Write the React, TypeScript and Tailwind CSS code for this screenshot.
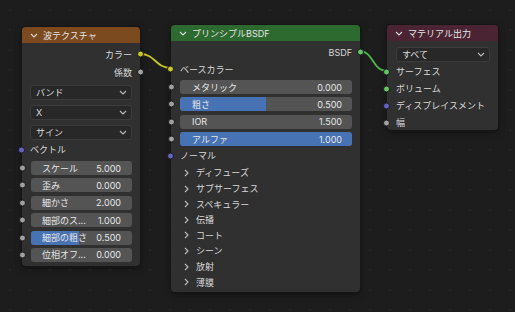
import type { ReactNode } from "react";

const FONT = { fontFamily: 'Inter, "Noto Sans CJK JP", sans-serif' };

const SOCKET: Record<string, string> = {
  yellow: "bg-[#c7c729]",
  gray: "bg-[#a1a1a1]",
  purple: "bg-[#6363c7]",
  green: "bg-[#63c763]",
};

function Socket({ color, side }: { color: string; side: "left" | "right" }) {
  return (
    <span
      className={`absolute top-1/2 size-[7px] -translate-y-1/2 rounded-full border border-[#1b1b1b] ${SOCKET[color]} ${
        side === "left" ? "-left-[4px]" : "-right-[4px]"
      }`}
    />
  );
}

function ChevronDown({ className = "" }: { className?: string }) {
  return (
    <svg viewBox="0 0 8 5" className={`h-[5px] w-[8px] ${className}`} fill="none">
      <polyline points="1,1 4,4 7,1" stroke="currentColor" strokeWidth="1.1" />
    </svg>
  );
}

function ChevronRight() {
  return (
    <svg viewBox="0 0 5 8" className="h-[8px] w-[5px] text-[#bdbdbd]" fill="none">
      <polyline points="1,1 4,4 1,7" stroke="currentColor" strokeWidth="1.1" />
    </svg>
  );
}

function Header({ title, color }: { title: string; color: string }) {
  return (
    <div className={`flex h-[16px] items-center gap-[5px] rounded-t-[4px] pl-[8px] text-[#e4e4e4] ${color}`}>
      <ChevronDown className="text-[#d8d8d8]" />
      <span>{title}</span>
    </div>
  );
}

function Output({ label, color, h }: { label: string; color: string; h: string }) {
  return (
    <div className={`relative flex items-center justify-end pr-[8px] ${h}`}>
      <span>{label}</span>
      <Socket color={color} side="right" />
    </div>
  );
}

function Input({ label, color, h, pl = "pl-[8px]" }: { label: string; color: string; h: string; pl?: string }) {
  return (
    <div className={`relative flex items-center ${pl} ${h}`}>
      <span>{label}</span>
      <Socket color={color} side="left" />
    </div>
  );
}

function Dropdown({ label, className }: { label: string; className: string }) {
  return (
    <div
      className={`flex h-[15px] items-center justify-between rounded-[3px] border border-[#3c3c3c] bg-[#282828] pl-[5px] pr-[4px] text-[#dcdcdc] ${className}`}
    >
      <span>{label}</span>
      <ChevronDown className="text-[#bdbdbd]" />
    </div>
  );
}

function Field({
  label,
  value,
  fill,
  pad,
}: {
  label: string;
  value: string;
  fill: number;
  pad: string;
}) {
  return (
    <div className="relative h-[14px] overflow-hidden rounded-[3px] bg-[#545454] text-[#e6e6e6]">
      <div className="absolute inset-y-0 left-0 bg-[#4772b3]" style={{ width: `${fill * 100}%` }} />
      <div className={`relative flex h-full items-center justify-between ${pad}`}>
        <span>{label}</span>
        <span>{value}</span>
      </div>
    </div>
  );
}

function FieldRow({ children, socket = "gray" }: { children: ReactNode; socket?: string }) {
  return (
    <div className="relative">
      {children}
      <span
        className={`absolute top-1/2 size-[7px] -translate-y-1/2 rounded-full border border-[#1b1b1b] ${SOCKET[socket]} -left-[12.5px]`}
      />
    </div>
  );
}

function Node({ className, children }: { className: string; children: ReactNode }) {
  return (
    <div
      className={`absolute rounded-[4px] bg-[#303030] shadow-[0_0_0_1px_#161616,0_2px_6px_rgba(0,0,0,0.5)] ${className}`}
    >
      {children}
    </div>
  );
}

export default function App() {
  const waveFields: [string, string, number][] = [
    ["スケール", "5.000", 0],
    ["歪み", "0.000", 0],
    ["細かさ", "2.000", 0],
    ["細部のス...", "1.000", 0],
    ["細部の粗さ", "0.500", 0.48],
    ["位相オフ...", "0.000", 0],
  ];
  const bsdfFields: [string, string, number][] = [
    ["メタリック", "0.000", 0],
    ["粗さ", "0.500", 0.5],
    ["IOR", "1.500", 0],
    ["アルファ", "1.000", 1],
  ];
  const panels = ["ディフューズ", "サブサーフェス", "スペキュラー", "伝播", "コート", "シーン", "放射", "薄膜"];

  return (
    <div
      className="relative h-[312px] w-[515px] overflow-hidden bg-[#1d1d1d] bg-[radial-gradient(circle,#242424_0.8px,transparent_1px)] bg-[length:20px_20px] text-[9px] leading-none text-[#d8d8d8]"
      style={FONT}
    >
      <svg className="absolute inset-0" width="515" height="312" fill="none">
        <path d="M140 54 C 156 54, 155 68, 171 68" stroke="#c7c729" strokeWidth="1.8" />
        <path d="M359 51 C 374 51, 372 71, 387 71" stroke="#4fb84f" strokeWidth="1.8" />
      </svg>

      {/* 波テクスチャ */}
      <Node className="left-[22px] top-[27px] h-[239px] w-[118px]">
        <Header title="波テクスチャ" color="bg-[#7b4a1f]" />
        <div className="pt-[2px]">
          <Output label="カラー" color="yellow" h="h-[18px]" />
          <Output label="係数" color="gray" h="h-[18px]" />
          <div className="mt-[4px] flex flex-col gap-[5px] px-[8px]">
            <Dropdown label="バンド" className="" />
            <Dropdown label="X" className="" />
            <Dropdown label="サイン" className="" />
          </div>
          <Input label="ベクトル" color="purple" h="h-[19px]" pl="pl-[8px]" />
          <div className="mt-[2px] flex flex-col gap-[3.4px] pl-[9px] pr-[8px]">
            {waveFields.map(([l, v, f]) => (
              <FieldRow key={l}>
                <Field label={l} value={v} fill={f} pad="pl-[11px] pr-[11px]" />
              </FieldRow>
            ))}
          </div>
        </div>
      </Node>

      {/* プリンシプルBSDF */}
      <Node className="left-[171px] top-[25px] h-[267px] w-[189px]">
        <Header title="プリンシプルBSDF" color="bg-[#2d6a2f]" />
        <div className="pt-[2px]">
          <Output label="BSDF" color="green" h="h-[18px]" />
          <Input label="ベースカラー" color="yellow" h="h-[16px]" pl="pl-[9px]" />
          <div className="mt-[3px] flex flex-col gap-[3.4px] pl-[9px] pr-[8px]">
            {bsdfFields.map(([l, v, f]) => (
              <FieldRow key={l}>
                <Field label={l} value={v} fill={f} pad="pl-[12px] pr-[10px]" />
              </FieldRow>
            ))}
          </div>
          <Input label="ノーマル" color="purple" h="h-[19px]" pl="pl-[9px]" />
          <div className="flex flex-col">
            {panels.map((p) => (
              <div key={p} className="flex h-[15.6px] items-center gap-[7px] pl-[13px]">
                <ChevronRight />
                <span>{p}</span>
              </div>
            ))}
          </div>
        </div>
      </Node>

      {/* マテリアル出力 */}
      <Node className="left-[387px] top-[25px] h-[105px] w-[111px]">
        <Header title="マテリアル出力" color="bg-[#4b2433]" />
        <div className="pt-[6px]">
          <Dropdown label="すべて" className="mx-[9px] w-[94px]" />
          <div className="mt-[1px]">
            <Input label="サーフェス" color="green" h="h-[17px]" pl="pl-[9px]" />
            <Input label="ボリューム" color="green" h="h-[17px]" pl="pl-[9px]" />
            <Input label="ディスプレイスメント" color="purple" h="h-[17px]" pl="pl-[9px]" />
            <Input label="幅" color="gray" h="h-[17px]" pl="pl-[9px]" />
          </div>
        </div>
      </Node>
    </div>
  );
}
